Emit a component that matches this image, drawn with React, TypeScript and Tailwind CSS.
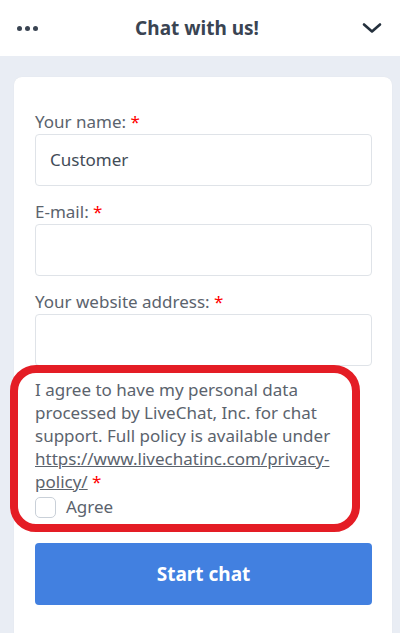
import React from 'react';

function Field({ label, value }: { label: string; value?: string }) {
  return (
    <div className="mb-[14px]">
      <div className="text-[17px] leading-6 text-[#5b636d]">
        {label} <span className="text-[#f00]">*</span>
      </div>
      <div className="h-[52px] rounded-[4px] border border-[#dfe3e8] bg-white px-[14px] flex items-center text-[17px] text-[#424c57]">
        {value}
      </div>
    </div>
  );
}

export default function App() {
  return (
    <div className="relative w-[400px] h-[633px] overflow-hidden bg-[#e9edf4] font-['Noto_Sans',sans-serif]">
      {/* header */}
      <div className="h-14 bg-white flex items-center justify-between pl-[17px] pr-[18px]">
        <div className="flex gap-[3px]">
          <span className="w-[5px] h-[5px] rounded-full bg-[#3a4452]" />
          <span className="w-[5px] h-[5px] rounded-full bg-[#3a4452]" />
          <span className="w-[5px] h-[5px] rounded-full bg-[#3a4452]" />
        </div>
        <div className="text-[19px] font-bold text-[#3a4452] -ml-[6px]">Chat with us!</div>
        <svg width="20" height="12" viewBox="0 0 20 12" fill="none">
          <path d="M2 2.5l8 7 8-7" stroke="#24303d" strokeWidth="2.6" strokeLinecap="round" strokeLinejoin="round" />
        </svg>
      </div>

      <div className="pt-[21px] pl-[14px] pr-[8px]">
        <div className="bg-white rounded-lg pt-[33px] pl-[21px] pr-[20px] pb-10 shadow-[0_0_1px_rgba(0,0,0,0.08)]">
          <Field label="Your name:" value="Customer" />
          <Field label="E-mail:" />
          <Field label="Your website address:" />

          <p className="-mt-[2px] text-[17px] leading-[23px] text-[#5b636d]">
            I agree to have my personal data processed by LiveChat, Inc. for chat support. Full
            policy is available under{' '}
            <span className="underline">https://www.livechatinc.com/privacy-policy/</span>{' '}
            <span className="text-[#f00]">*</span>
          </p>
          <label className="mt-[2px] flex items-center h-6 gap-[10px] text-[17px] text-[#5b636d]">
            <span className="w-[21px] h-[21px] rounded-[5px] border border-[#c9d0d8] bg-white" />
            Agree
          </label>

          <button className="mt-6 w-full h-[62px] rounded-[4px] bg-[#4280e0] text-white text-[19px] font-bold">
            Start chat
          </button>
        </div>
      </div>

      {/* highlight annotation */}
      <div className="absolute left-[10px] top-[365px] w-[350px] h-[167px] border-[8px] border-[#e41d25] rounded-[26px] pointer-events-none" />
    </div>
  );
}
